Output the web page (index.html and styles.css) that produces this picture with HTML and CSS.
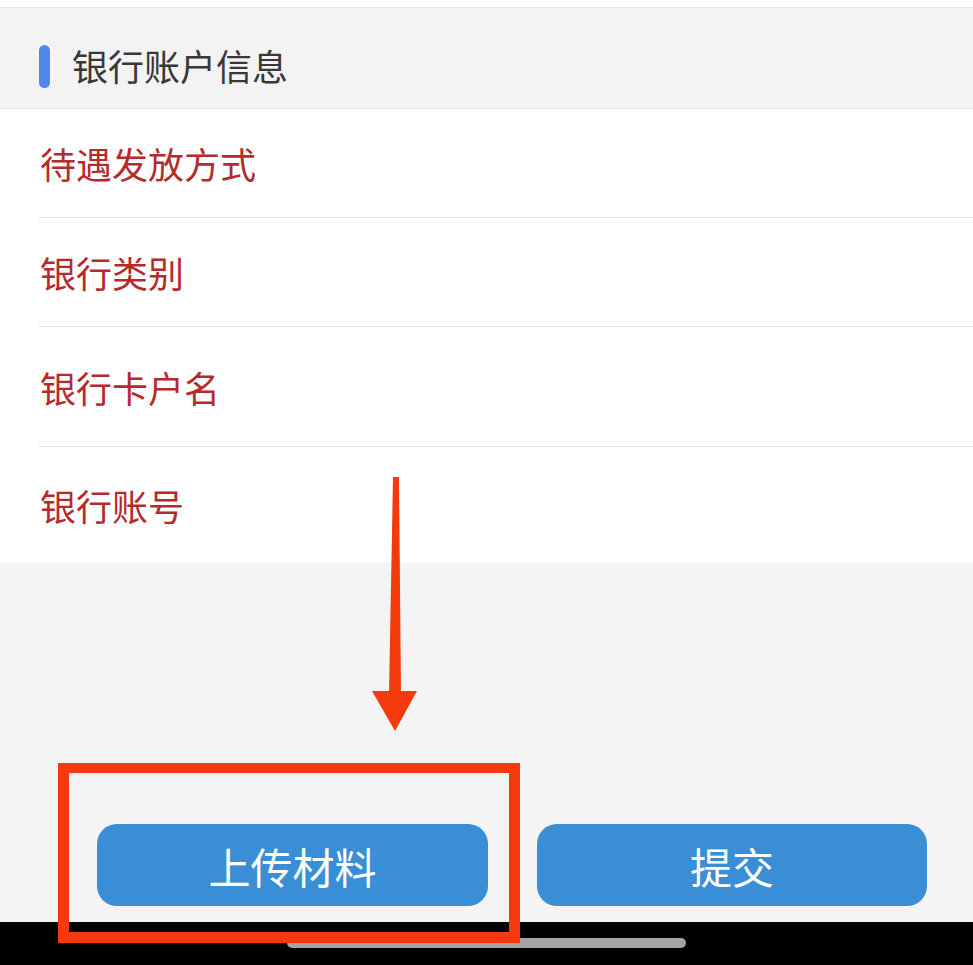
FILE: index.html
```html
<!DOCTYPE html>
<html lang="zh-CN">
<head>
<meta charset="utf-8">
<title>银行账户信息</title>
<link rel="stylesheet" href="styles.css">
</head>
<body>
<div class="page">
  <div class="top-strip"></div>
  <div class="section-header">
    <span class="accent"></span>
    <span class="section-title">银行账户信息</span>
  </div>
  <div class="list">
    <div class="row r1"><span class="label">待遇发放方式</span></div>
    <div class="row r2"><span class="label">银行类别</span></div>
    <div class="row r3"><span class="label">银行卡户名</span></div>
    <div class="row r4 last"><span class="label">银行账号</span></div>
  </div>
  <div class="filler"></div>
  <div class="actions">
    <button class="btn btn-upload">上传材料</button>
    <button class="btn btn-submit">提交</button>
  </div>
  <div class="home-bar"><span class="indicator"></span></div>

  <div class="annot-box"></div>
  <svg class="annot-arrow" width="60" height="260" viewBox="0 0 60 260">
    <polygon points="25,0 31,0 33,218 21,218" fill="#f43a0d"/>
    <polygon points="4,214 49,214 27,254" fill="#f43a0d"/>
  </svg>
</div>
</body>
</html>
```
FILE: styles.css
```css
* { box-sizing: border-box; }
html, body { margin: 0; padding: 0; }
body {
  background: #f4f4f4;
  font-family: "Noto Sans CJK SC", "Noto Sans", sans-serif;
}
.page {
  position: relative;
  width: 973px;
  height: 965px;
  display: flex;
  flex-direction: column;
  overflow: hidden;
  background: #f4f4f5;
}
.top-strip {
  height: 8px;
  background: #ffffff;
  border-bottom: 1px solid #e8e8e8;
  flex: none;
}
.section-header {
  height: 101px;
  flex: none;
  display: flex;
  align-items: center;
  padding-left: 39px;
  padding-top: 14px;
  background: #f3f3f3;
  border-bottom: 1px solid #e6e6e6;
}
.accent {
  width: 11px;
  height: 43px;
  border-radius: 6px;
  background: #4e87ef;
  margin-top: 2px;
}
.section-title {
  margin-left: 22px;
  font-size: 36px;
  color: #383838;
  line-height: 1;
}
.list {
  background: #ffffff;
  flex: none;
}
.row {
  margin-left: 38px;
  display: flex;
  align-items: center;
  border-bottom: 1px solid #e6e6e6;
}
.r1 { height: 109px; }
.r2 { height: 109px; }
.r3 { height: 120px; }
.r4 { height: 116px; border-bottom: none; }
.label {
  font-size: 36px;
  color: #b52a2c;
  line-height: 1;
  margin-left: 2px;
}
.filler { flex: 1; }
.actions {
  flex: none;
  display: flex;
  gap: 49px;
  padding: 0 46px 16px 97px;
}
.btn {
  width: 391px;
  height: 82px;
  border: none;
  border-radius: 20px;
  background: #3a8ed6;
  color: #ffffff;
  font-family: "Noto Sans CJK SC", "Noto Sans", sans-serif;
  font-size: 42px;
  padding: 0;
  display: flex;
  align-items: center;
  justify-content: center;
}
.btn-submit { width: 390px; }
.home-bar {
  height: 43px;
  flex: none;
  background: #000000;
  display: flex;
  justify-content: center;
  padding-top: 16px;
}
.indicator {
  width: 399px;
  height: 10px;
  border-radius: 5px;
  background: #a3a3a3;
}
.annot-box {
  position: absolute;
  left: 58px;
  top: 763px;
  width: 462px;
  height: 180px;
  border: 11px solid #f43a0d;
  border-top-width: 10px;
}
.annot-arrow {
  position: absolute;
  left: 368px;
  top: 477px;
}
```
